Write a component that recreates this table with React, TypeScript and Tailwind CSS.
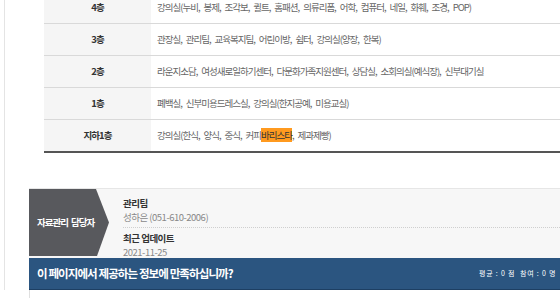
import { ReactNode } from "react";

type Floor = {
  floor: string;
  rooms: ReactNode;
};

const floors: Floor[] = [
  {
    floor: "4층",
    rooms:
      "강의실(누비, 봉제, 조각보, 퀼트, 홈패션, 의류리폼, 어학, 컴퓨터, 네일, 화훼, 조경, POP)",
  },
  {
    floor: "3층",
    rooms: "관장실, 관리팀, 교육복지팀, 어린이방, 쉼터, 강의실(양장, 한복)",
  },
  {
    floor: "2층",
    rooms:
      "라운지소담, 여성새로일하기센터, 다문화가족지원센터, 상담실, 소회의실(예식장), 신부대기실",
  },
  {
    floor: "1층",
    rooms: "폐백실, 신부미용드레스실, 강의실(한지공예, 미용교실)",
  },
  {
    floor: "지하1층",
    rooms: (
      <>
        강의실(한식, 양식, 중식, 커피
        <span className="bg-[#ff9a1f] text-[#333]">바리스타</span>, 제과제빵)
      </>
    ),
  },
];

function App() {
  return (
    <div className="h-[298px] w-[560px] overflow-hidden bg-white font-['Noto_Sans_CJK_KR',sans-serif]">
      <div className="ml-[4px] h-full border-l border-[#e4e4e4]">
        {/* floor guide table */}
        <div className="-mt-[8px] ml-[39px] w-[600px]">
          {floors.map((f, i) => {
            const last = i === floors.length - 1;
            return (
              <div
                key={f.floor}
                className={`flex ${last ? "h-[33px] border-b-2 border-[#555]" : "h-[32px] border-b border-[#d9d9d9]"}`}
              >
                <div className="flex w-[107px] shrink-0 items-center justify-center bg-[#f5f5f5] text-[9.5px] font-bold tracking-[-0.9px] text-[#333]">
                  {f.floor}
                </div>
                <div className="flex flex-1 items-center whitespace-nowrap pl-[6px] text-[9.5px] tracking-[-1px] text-[#666] [word-spacing:2.8px]">
                  <span>{f.rooms}</span>
                </div>
              </div>
            );
          })}
        </div>

        {/* manager info */}
        <div className="ml-[24px] mt-[35px] flex h-[70px] border-t border-[#e6e6e6] bg-[#f7f7f7]">
          <div className="flex h-[67px] w-[81px] shrink-0 items-center bg-[#58595d] pl-[8px] text-[9.5px] font-bold tracking-[-1px] text-white [word-spacing:2px] [clip-path:polygon(0_0,67px_0,80px_50%,68px_100%,0_100%)]">
            자료관리 담당자
          </div>
          <div className="ml-[13px] flex-1 pt-[7px] text-[9.5px] leading-[14px] tracking-[-0.5px]">
            <div className="border-b border-dotted border-[#cfcfcf] pb-[3px]">
              <p className="font-bold text-[#333]">관리팀</p>
              <p className="text-[#888]">성하은 (051-610-2006)</p>
            </div>
            <div className="pt-[3px]">
              <p className="font-bold text-[#333]">최근 업데이트</p>
              <p className="text-[#888]">2021-11-25</p>
            </div>
          </div>
        </div>

        {/* satisfaction survey */}
        <div className="ml-[24px] flex h-[32px] items-center border-b border-[#1d3f63] bg-[#2b5580] pl-[8px] text-white">
          <span className="w-[442px] shrink-0 text-[11.5px] font-bold tracking-[-0.9px]">
            이 페이지에서 제공하는 정보에 만족하십니까?
          </span>
          <span className="whitespace-nowrap text-[7px] tracking-[0.8px]">
            평균 : 0 점 &nbsp;참여 : 0 명
          </span>
        </div>
        <div className="ml-[24px] h-[20px] border-l border-[#e0e0e0]" />
      </div>
    </div>
  );
}

export default App;
